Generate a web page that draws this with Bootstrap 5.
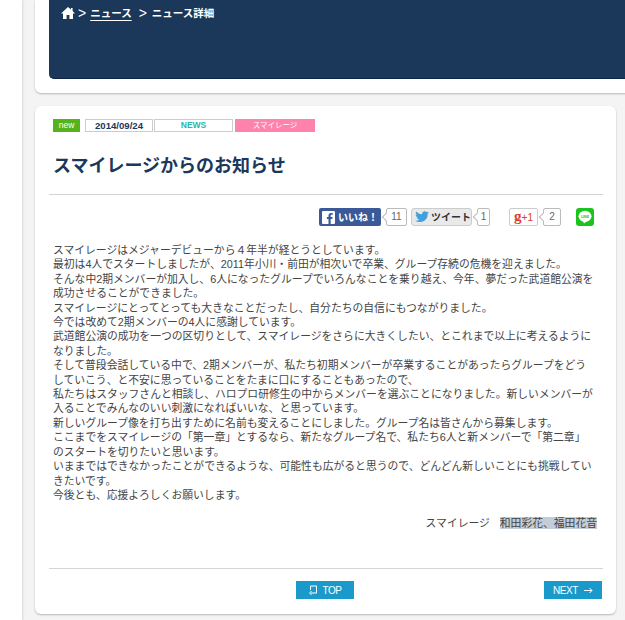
<!DOCTYPE html>
<html lang="ja"><head><meta charset="utf-8">
<link href="https://cdn.jsdelivr.net/npm/bootstrap@5.3.0/dist/css/bootstrap.min.css" rel="stylesheet">
<style>
html,body{height:620px;overflow:hidden}
body{background:#f4f4f4;font-family:"Liberation Sans","Noto Sans CJK JP",sans-serif;color:#333}
.rail{width:22px;height:620px;background:#fff;box-shadow:1px 0 2px rgba(0,0,0,.12);flex:none}
.stage{width:581px;margin-left:13px;flex:none}
.sheet{background:#fff;border-radius:0 0 6px 6px;box-shadow:0 1px 2px rgba(0,0,0,.25);padding:0 14px 14px;margin-right:-40px}
.hero{background:#1b3759;height:79px;border-radius:0 0 5px 5px;border-bottom:1px solid #0f2747;color:#fff;font-size:10.5px;font-weight:700;padding-top:6px;padding-left:12px;line-height:14px}
.hero a{color:#fff;text-underline-offset:3px;padding-right:2px}
.gt{font-size:14px;font-weight:400;line-height:14px}
.gt-a{margin-left:3px;margin-right:4px}
.gt-b{margin-left:5px;margin-right:5px}
.post{background:#fff;border-radius:6px;box-shadow:0 1px 2px rgba(0,0,0,.25);margin-top:13px;height:508px;padding:13px 13px 0 14px}
.tagline{line-height:13px;gap:1px;padding-left:4px}
.tg{height:13px;text-align:center;font-weight:700}
.t-new{width:27px;background:#55b31c;color:#fff;font-size:8.5px;font-weight:400}
.t-date{width:68px;border:1px solid #ccc;line-height:11px;color:#1b3759;margin-left:4px;font-size:9.6px}
.t-news{width:79px;border:1px solid #ccc;line-height:11px;color:#2ab5b0;font-size:8.5px}
.t-cat{width:80px;background:#fe82ab;color:#fff;font-weight:400;font-size:7.5px;margin-left:1px}
.headline{font-size:18px;font-weight:700;color:#1b3759;margin:21px 0 0 4px;line-height:26px;height:41px}
.rule{border-top:1px solid #d4d4d4;opacity:1;margin:0}
.social{height:20px;margin-top:12px;padding-right:9px;font-size:10px}
.b-fb{background:#3b5998;color:#fff;width:62px;height:18px;border-radius:2px;font-weight:700;gap:3px;padding-left:3px}
.b-tw{background:#e9e9e9;border:1px solid #ccc;border-radius:3px;width:61px;height:18px;font-weight:700;gap:2px;padding-left:3px;color:#333;margin-left:4px}
.cnt{border:1px solid #bbb;border-radius:2px;height:18px;background:#fff;color:#666;text-align:center;line-height:16px;position:relative;margin-left:5px}
.cnt::before{content:"";position:absolute;left:-4px;top:5px;width:6px;height:6px;background:#fff;border-left:1px solid #bbb;border-bottom:1px solid #bbb;transform:rotate(45deg)}
.c11{width:21px}.c1{width:13px}.c2{width:18px}
.b-gp{border:1px solid #ccc;border-radius:2px;width:29px;height:18px;color:#d9402e;line-height:15px;text-align:center;background:#fff;margin-left:19px}
.b-gp b{font-family:"Liberation Serif",serif;font-size:15px}
.b-line{width:18px;height:18px;background:#1dc31d;border-radius:3px;margin-left:15px}
.copy{font-size:10.8px;line-height:14.41px;padding:0 0 0 4px;margin:16px 0 0;color:#444;white-space:nowrap}
.signoff{font-size:10.8px;line-height:16px;text-align:right;padding-right:6px;margin-top:13px;color:#444}
.signoff span{background:#c3ccd7;margin-left:10px}
.foot{margin-top:37px}
.foot-row{height:18px;margin-top:12px;padding-right:1px}
.go{background:#1a9acb;color:#fff;font-size:10px;letter-spacing:-.4px;width:58px;height:18px;border-radius:0;padding:0;border:0}
.go:hover{background:#1a9acb;color:#fff}
.go-top{margin-left:247px;gap:5px}
.go-next{gap:6px}
.ln{font:700 3.6px "Liberation Sans",sans-serif;fill:#1dc31d}
</style></head><body>
<div class="d-flex">
<div class="rail"></div>
<div class="stage">
<div class="sheet"><div class="hero">
<div class="d-flex align-items-center">
<svg width="14" height="12" viewBox="0 0 14 12"><path fill="#fff" d="M7 0 0 6.400h2V12h3.600V8h2.800v4H12V6.400h2L11.600 4V1H10v1.500z"/></svg>
<span class="gt gt-a">&gt;</span><a href="#">ニュース</a><span class="gt gt-b">&gt;</span><span>ニュース詳細</span></div>
</div></div>
<div class="post">
<div class="d-flex tagline"><div class="tg t-new">new</div><div class="tg t-date">2014/09/24</div><div class="tg t-news">NEWS</div><div class="tg t-cat">スマイレージ</div></div>
<h1 class="headline">スマイレージからのお知らせ</h1>
<hr class="rule">
<div class="social d-flex justify-content-end align-items-center">
<div class="b-fb d-flex align-items-center"><svg width="13" height="13" viewBox="0 0 12 12"><rect width="12" height="12" rx="1" fill="#fff"/><path fill="#3b5998" d="M8 12V7.300h1.500l.3-1.800H8V4.400c0-.6.2-.9.9-.9h1V1.900H8.400C6.800 1.900 6 2.800 6 4.200v1.300H4.500v1.800H6V12z"/></svg><span>いいね！</span></div>
<div class="cnt c11">11</div>
<div class="b-tw d-flex align-items-center"><svg width="14" height="12" viewBox="0 0 14 12"><path fill="#3fa2dc" d="M14 1.500c-.5.200-1 .4-1.600.4.600-.3 1-.9 1.200-1.500-.5.300-1.100.6-1.800.7A2.800 2.800 0 0 0 7 3.200C4.700 3.100 2.600 2 1.200.4.400 1.700.800 3.300 2 4.100c-.4 0-.9-.1-1.300-.3 0 1.300 1 2.500 2.300 2.800-.4.100-.9.100-1.300 0 .4 1.100 1.400 1.900 2.700 2A5.800 5.800 0 0 1 0 9.800C5.600 13 13 9.800 12.600 3c.6-.4 1-.9 1.400-1.500z"/></svg><span>ツイート</span></div>
<div class="cnt c1">1</div>
<div class="b-gp"><b>g</b>+1</div>
<div class="cnt c2">2</div>
<div class="b-line"><svg width="18" height="18" viewBox="0 0 18 18" class="d-block"><ellipse cx="9" cy="8.300" rx="6.500" ry="5.500" fill="#fff"/><path fill="#fff" d="M7 13l1 2.500 3-2.500z"/><text x="9" y="9.600" text-anchor="middle" class="ln">LINE</text></svg></div>
</div>
<div class="copy">スマイレージはメジャーデビューから４年半が経とうとしています。<br>最初は4人でスタートしましたが、2011年小川・前田が相次いで卒業、グループ存続の危機を迎えました。<br>そんな中2期メンバーが加入し、6人になったグループでいろんなことを乗り越え、今年、夢だった武道館公演を<br>成功させることができました。<br>スマイレージにとってとっても大きなことだったし、自分たちの自信にもつながりました。<br>今では改めて2期メンバーの4人に感謝しています。<br>武道館公演の成功を一つの区切りとして、スマイレージをさらに大きくしたい、とこれまで以上に考えるように<br>なりました。<br>そして普段会話している中で、2期メンバーが、私たち初期メンバーが卒業することがあったらグループをどう<br>していこう、と不安に思っていることをたまに口にすることもあったので、<br>私たちはスタッフさんと相談し、ハロプロ研修生の中からメンバーを選ぶことになりました。新しいメンバーが<br>入ることでみんなのいい刺激になればいいな、と思っています。<br>新しいグループ像を打ち出すために名前も変えることにしました。グループ名は皆さんから募集します。<br>ここまでをスマイレージの「第一章」とするなら、新たなグループ名で、私たち6人と新メンバーで「第二章」<br>のスタートを切りたいと思います。<br>いままではできなかったことができるような、可能性も広がると思うので、どんどん新しいことにも挑戦してい<br>きたいです。<br>今後とも、応援よろしくお願いします。</div>
<div class="signoff">スマイレージ<span>和田彩花、福田花音</span></div>
<div class="foot"><hr class="rule">
<div class="d-flex justify-content-between foot-row">
<a class="btn go go-top d-flex align-items-center justify-content-center" href="#"><svg width="9" height="10" viewBox="0 0 9 10"><path fill="none" stroke="#fff" d="M2.500 5V1h6v7H3M3.500 6 1.500 8l2 2"/></svg>TOP</a>
<a class="btn go go-next d-flex align-items-center justify-content-center" href="#">NEXT<svg width="9" height="7" viewBox="0 0 9 7"><path fill="none" stroke="#fff" d="M0 3.500h8M5.500 1 8 3.500 5.500 6"/></svg></a>
</div></div>
</div>
</div>
</div>
</body></html>
